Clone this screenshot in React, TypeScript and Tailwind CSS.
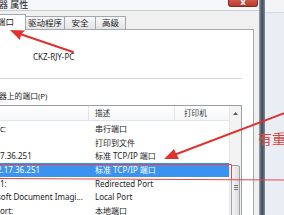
const rows = [
  { port: "c:", desc: "串行端口" },
  { port: "", desc: "打印到文件" },
  { port: "7.36.251", desc: "标准 TCP/IP 端口" },
  { port: "2.17.36.251", desc: "标准 TCP/IP 端口", selected: true, shift: true },
  { port: "1:", desc: "Redirected Port" },
  { port: "soft Document Imagi...", desc: "Local Port", shift: true },
  { port: "ort:", desc: "本地端口" },
];

function Annotations() {
  return (
    <svg className="absolute inset-0 pointer-events-none" width={284} height={215} viewBox="0 0 284 215">
      {/* arrow to the 端口 tab */}
      <line x1={73} y1={52} x2={20} y2={34} stroke="#e2302c" strokeWidth={2} strokeLinecap="round" />
      <polygon points="10,30 25,30.5 21,34.5 20,40" fill="#e2302c" />
      {/* arrow to the TCP/IP row */}
      <line x1={290} y1={111} x2={174} y2={155} stroke="#e2302c" strokeWidth={2} />
      <polygon points="164,159 174,149 176,153.5 179,159" fill="#e2302c" />
      {/* box around the selected row */}
      <polyline points="-2,164.5 231.5,164.5 231.5,178.5" fill="none" stroke="#e0474b" strokeWidth={1} />
      <line x1={-2} y1={178.5} x2={284} y2={180} stroke="#e0474b" strokeWidth={1} />
    </svg>
  );
}

export default function App() {
  return (
    <div className="relative w-[284px] h-[215px] overflow-hidden flex bg-[#eef2f6] font-['Noto_Sans','Noto_Sans_CJK_SC',sans-serif] text-[#1b1b1b]">
      {/* dialog */}
      <div className="w-[259px] flex flex-col bg-[#f0f0f0]">
        <div className="h-[13px] flex justify-between bg-[#f5f7fa] border-b border-[#c9ced6]">
          <span className="text-[9px] leading-[10px] -ml-[1px]">器 属性</span>
          <div className="w-[30px] h-[7px] mr-[1px] rounded-b-[3px] bg-gradient-to-b from-[#d2574b] to-[#b8392c] border border-t-0 border-[#8a2a22] flex justify-center overflow-hidden">
            <span className="text-white text-[9px] font-bold leading-[3px]">x</span>
          </div>
        </div>
        <div className="flex-1 flex flex-col pr-[5px]">
          {/* tabs */}
          <div className="h-[18px] flex items-end">
            <div className="w-[27px] h-[16px] -ml-[1px] bg-white border border-b-0 border-[#a3a7ae] relative z-10 -mb-[1px] pt-[2px] overflow-hidden whitespace-nowrap">
              <span className="text-[8.5px] leading-[10px] -ml-[3px] block">端口</span>
            </div>
            <div className="w-[39px] h-[13px] border border-b-0 border-l-0 border-[#a3a7ae] bg-gradient-to-b from-[#f7f7f7] to-[#e4e4e4] text-[8.5px] leading-[12px] text-center">驱动程序</div>
            <div className="w-[31px] h-[13px] border border-b-0 border-l-0 border-[#a3a7ae] bg-gradient-to-b from-[#f7f7f7] to-[#e4e4e4] text-[8.5px] leading-[12px] text-center">安全</div>
            <div className="w-[30px] h-[13px] border border-b-0 border-l-0 border-[#a3a7ae] bg-gradient-to-b from-[#f7f7f7] to-[#e4e4e4] text-[8.5px] leading-[12px] text-center">高级</div>
          </div>
          {/* tab panel */}
          <div className="flex-1 bg-white border-t border-r border-[#a3a7ae] flex flex-col">
            <div className="mt-[22px] pl-[33px] text-[8px] leading-[10px]">CKZ-RJY-PC</div>
            <div className="mt-[16px] mr-[11px] h-px bg-[#d5d5d5]" />
            <div className="mt-[12px] -ml-[1px] text-[7.8px] leading-[10px]">器上的端口(P)</div>
            {/* list */}
            <div className="mt-[4px] mr-[11px] flex-1 flex border-t border-r border-[#9a9fa6] text-[8px]">
              <div className="flex-1 flex flex-col">
                <div className="h-[15px] flex items-center border-b border-[#e2e4e8] bg-gradient-to-b from-white to-[#f6f7f9] text-[#333] text-[7.6px]">
                  <div className="w-[89px] h-full border-r border-[#e2e4e8]" />
                  <div className="w-[86px] h-full pl-[6px] leading-[14px] border-r border-[#e2e4e8]">描述</div>
                  <div className="flex-1 pl-[9px] leading-[14px]">打印机</div>
                </div>
                <div className="h-px" />
                {rows.map((r, i) => (
                  <div
                    key={i}
                    className={`h-[13.7px] flex items-center whitespace-nowrap ${r.selected ? "bg-[#3a93f0] text-white" : ""}`}
                  >
                    <div className="w-[89px] overflow-hidden">
                      <span className={`block ${r.shift ? "-ml-[3px]" : ""}`}>{r.port}</span>
                    </div>
                    <div className="w-[86px] pl-[6px] overflow-hidden">{r.desc}</div>
                  </div>
                ))}
              </div>
              {/* scrollbar */}
              <div className="w-[12px] flex flex-col border-l border-[#e6e6e6] bg-[#f3f3f3]">
                <div className="h-[15px] flex items-center justify-center">
                  <svg width="5" height="3" viewBox="0 0 5 3">
                    <polygon points="0,3 2.5,0 5,3" fill="#5a5a5a" />
                  </svg>
                </div>
                <div className="h-[44px]" />
                <div className="flex-1 mx-[1px] rounded-[2px] border border-[#9ea2a8] bg-gradient-to-r from-[#f4f4f4] to-[#dcdcdc] flex flex-col items-center pt-[19px] gap-[1px]">
                  <div className="w-[4px] h-px bg-[#777]" />
                  <div className="w-[4px] h-px bg-[#777]" />
                  <div className="w-[4px] h-px bg-[#777]" />
                </div>
              </div>
            </div>
          </div>
        </div>
      </div>
      {/* window edge */}
      <div className="w-[6px] bg-gradient-to-r from-[#9aa6b4] via-[#3e4956] to-[#7f8b99]" />
      {/* window behind */}
      <div className="flex-1 flex flex-col">
        <div className="h-[13px] border-b border-[#d6dbe2] bg-[#f2f4f7]" />
        <div className="flex-1 bg-[#e9eef4]" />
      </div>
      <Annotations />
      <div className="absolute left-[258px] top-[131px] text-[14px] leading-[16px] text-[#d8463f] whitespace-nowrap">有重</div>
    </div>
  );
}
